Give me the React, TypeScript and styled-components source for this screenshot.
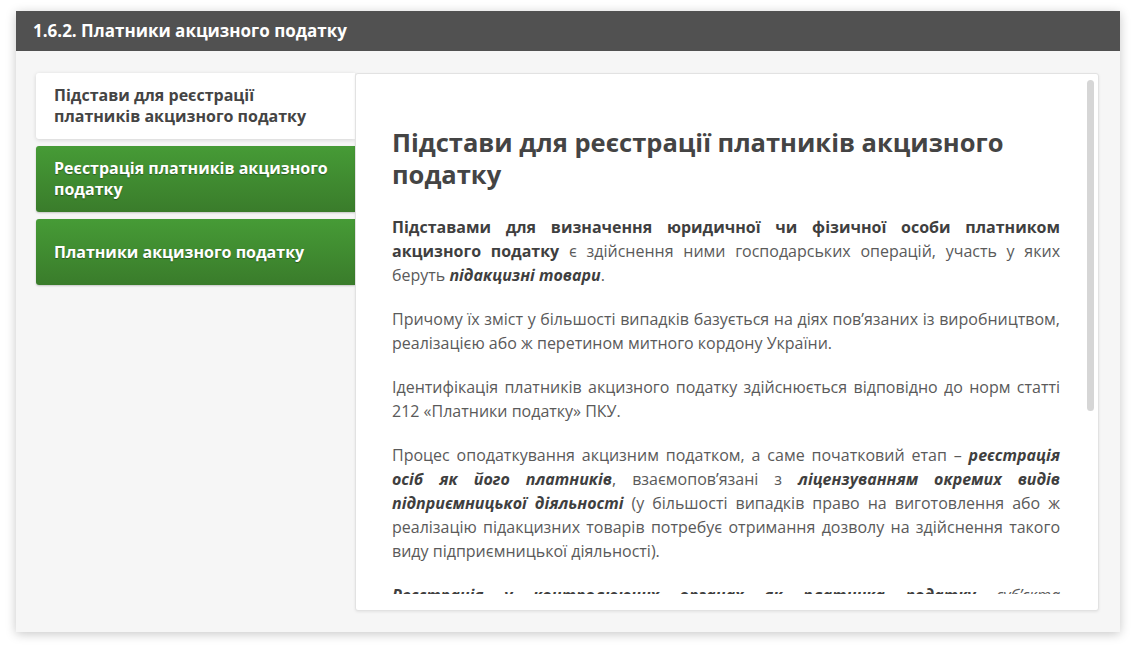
import { createGlobalStyle } from "styled-components";
import styled from "styled-components";

const GlobalStyle = createGlobalStyle`
  html, body {
    margin: 0;
    padding: 0;
    background: #ffffff;
  }
  body {
    font-family: "Open Sans", "Noto Sans", sans-serif;
    -webkit-font-smoothing: antialiased;
  }
  * {
    box-sizing: border-box;
  }
`;

const tabs = [
  { id: "grounds", title: "Підстави для реєстрації платників акцизного податку" },
  { id: "registration", title: "Реєстрація платників акцизного податку" },
  { id: "payers", title: "Платники акцизного податку" },
];

const App = (): JSX.Element => {
  const active = "grounds";

  return (
    <Page>
      <GlobalStyle />
      <Card>
        <Header>1.6.2. Платники акцизного податку</Header>
        <Body>
          <TabList>
            {tabs.map((tab) => (
              <Tab key={tab.id} $active={tab.id === active}>
                {tab.title}
              </Tab>
            ))}
          </TabList>
          <Panel>
            <Scroller>
              <Title>Підстави для реєстрації платників акцизного податку</Title>
              <Para>
                <strong>
                  Підставами для визначення юридичної чи фізичної особи платником
                  акцизного податку
                </strong>{" "}
                є здійснення ними господарських операцій, участь у яких беруть{" "}
                <strong>
                  <em>підакцизні товари</em>
                </strong>
                .
              </Para>
              <Para>
                Причому їх зміст у більшості випадків базується на діях пов’язаних
                із виробництвом, реалізацією або ж перетином митного кордону
                України.
              </Para>
              <Para>
                Ідентифікація платників акцизного податку здійснюється відповідно
                до норм статті 212 «Платники податку» ПКУ.
              </Para>
              <Para>
                Процес оподаткування акцизним податком, а саме початковий етап –{" "}
                <strong>
                  <em>реєстрація осіб як його платників</em>
                </strong>
                , взаємопов’язані з{" "}
                <strong>
                  <em>ліцензуванням окремих видів підприємницької діяльності</em>
                </strong>{" "}
                (у більшості випадків право на виготовлення або ж реалізацію
                підакцизних товарів потребує отримання дозволу на здійснення
                такого виду підприємницької діяльності).
              </Para>
              <Para>
                <strong>
                  <em>Реєстрація у контролюючих органах як платника податку</em>
                </strong>{" "}
                <em>суб’єкта</em> господарювання здійснюється на підставі поданої
                ним заяви.
              </Para>
            </Scroller>
            <ScrollThumb />
          </Panel>
        </Body>
      </Card>
    </Page>
  );
};

const Page = styled.div`
  padding: 11px 16px 21px 16px;
`;

const Card = styled.section`
  width: 1104px;
  height: 621px;
  background: #f6f6f6;
  box-shadow: 0 2px 10px rgba(0, 0, 0, 0.22);
  display: flex;
  flex-direction: column;
`;

const Header = styled.h1`
  margin: 0;
  height: 40px;
  flex-shrink: 0;
  background: #515151;
  color: #ffffff;
  font-size: 17px;
  font-weight: 700;
  line-height: 40px;
  padding-left: 17px;
`;

const Body = styled.div`
  flex: 1;
  min-height: 0;
  display: grid;
  grid-template-columns: 319px 1fr;
  padding: 22px 21px 21px 20px;
`;

const TabList = styled.nav`
  display: flex;
  flex-direction: column;
  gap: 7px;
`;

const Tab = styled.div<{ $active?: boolean }>`
  height: 66px;
  display: flex;
  align-items: center;
  padding: 0 18px;
  border-radius: 3px 0 0 3px;
  font-size: 16px;
  font-weight: 700;
  line-height: 21px;
  cursor: pointer;
  color: ${(p) => (p.$active ? "#444444" : "#ffffff")};
  background: ${(p) =>
    p.$active ? "#ffffff" : "linear-gradient(to bottom, #469b36, #3a7c2b)"};
  box-shadow: ${(p) =>
    p.$active ? "0 1px 4px rgba(0, 0, 0, 0.14)" : "0 1px 2px rgba(0, 0, 0, 0.2)"};
  text-shadow: ${(p) => (p.$active ? "none" : "0 1px 1px rgba(0, 0, 0, 0.35)")};
`;

const Panel = styled.article`
  position: relative;
  z-index: 1;
  background: #ffffff;
  border: 1px solid #e2e2e2;
  border-radius: 3px;
  box-shadow: 0 1px 3px rgba(0, 0, 0, 0.08);
  padding-bottom: 16px;
  display: flex;
  flex-direction: column;
  min-height: 0;
`;

const Scroller = styled.div`
  flex: 1;
  overflow: hidden;
  padding: 52px 38px 0 36px;
`;

const ScrollThumb = styled.div`
  position: absolute;
  top: 6px;
  right: 4px;
  width: 7px;
  height: 331px;
  border-radius: 4px;
  background: #d6d6d6;
`;

const Title = styled.h2`
  margin: 0 0 25px;
  color: #444444;
  font-size: 25.5px;
  font-weight: 700;
  line-height: 32px;
`;

const Para = styled.p`
  margin: 0 0 20px;
  color: #5a5a5a;
  font-size: 16px;
  line-height: 24px;
  text-align: justify;

  strong {
    color: #3f3f3f;
    font-weight: 700;
  }
`;

export default App;
